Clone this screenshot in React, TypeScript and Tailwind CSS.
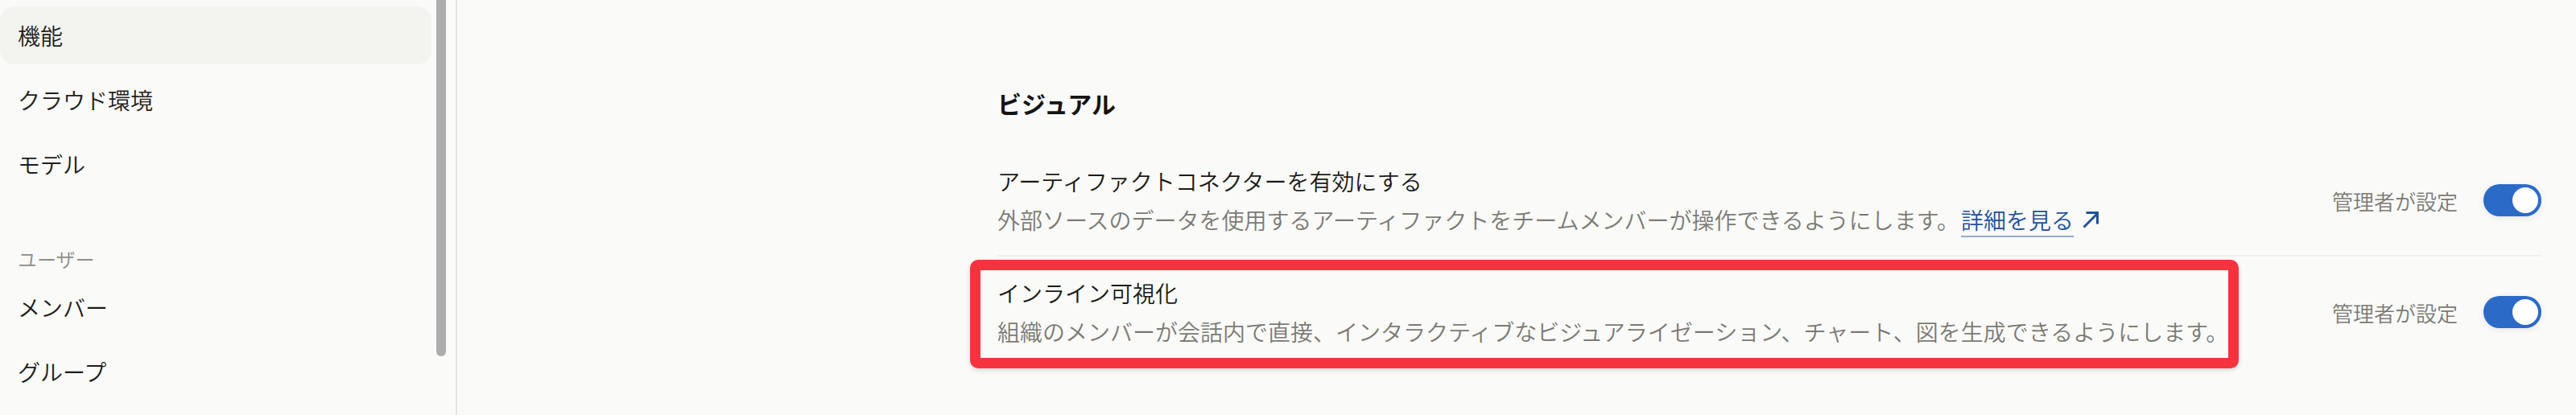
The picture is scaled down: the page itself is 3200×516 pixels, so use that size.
const font = { fontFamily: '"Noto Sans CJK JP", "Noto Sans", sans-serif' }

function NavItem({ label, active }: { label: string; active?: boolean }) {
  return (
    <div
      className={`flex h-[72px] w-[536px] items-center rounded-[18px] pl-[22px] text-[28px] font-[350] text-[#1d1d1b] ${
        active ? "bg-[#f3f3f0]" : ""
      }`}
    >
      {label}
    </div>
  )
}

function Toggle() {
  return (
    <div className="flex h-[40px] w-[72px] items-center justify-end rounded-full bg-[#2b6bc7] pr-[4px] shadow-[0_2px_8px_rgba(0,0,0,0.08)]">
      <div className="h-[32px] w-[32px] rounded-full bg-white" />
    </div>
  )
}

function ExternalArrow() {
  return (
    <svg viewBox="0 0 22 22" className="h-[22px] w-[22px]" fill="none" stroke="currentColor" strokeWidth={3}>
      <path d="M2.5 20.5 L19 4" />
      <path d="M5.5 2.5 H19.5 V16.5" />
    </svg>
  )
}

function SettingRow({
  title,
  children,
  last,
  highlight,
}: {
  title: string
  children: React.ReactNode
  last?: boolean
  highlight?: boolean
}) {
  return (
    <div
      className={`relative flex items-center justify-between ${
        last ? "pt-[25px] pb-[24px]" : "border-b-2 border-[#efefec] py-[24px]"
      }`}
    >
      <div className="flex flex-col">
        <div className="text-[28px] leading-[40px] font-[350] text-[#1a1a18]">{title}</div>
        <div className="mt-[8px] text-[28px] leading-[40px] font-[350] text-[#7b7a75]">{children}</div>
      </div>
      <div className="flex items-center gap-[32px]">
        <span className="text-[26px] font-[350] text-[#7b7a75]">管理者が設定</span>
        <Toggle />
      </div>
      {highlight && (
        // annotation frame drawn over the row
        <div className="pointer-events-none absolute top-[4px] left-[-34px] h-[135px] w-[1576px] rounded-[10px] border-[13px] border-[#f5333f] shadow-[0_2px_6px_rgba(0,0,0,0.15)]" />
      )}
    </div>
  )
}

export default function App() {
  return (
    <div className="flex h-[516px] w-[3200px] overflow-hidden bg-[#fafaf8]" style={font}>
      {/* Sidebar */}
      <aside className="relative h-full w-[568px] shrink-0 border-r-2 border-[#e4e4e1]">
        <nav className="flex flex-col gap-[8px] pt-[8px]">
          <NavItem label="機能" active />
          <NavItem label="クラウド環境" />
          <NavItem label="モデル" />
          <div className="mt-[58px] pl-[22px] text-[24px] leading-[32px] font-[350] text-[#8c8c88]">ユーザー</div>
          <NavItem label="メンバー" />
          <NavItem label="グループ" />
        </nav>
        <div className="absolute top-0 left-[542px] h-[443px] w-[12px] rounded-b-full bg-[#adadad]" />
      </aside>

      {/* Main */}
      <main className="flex-1 pt-[108px]">
        <div className="ml-[671px] w-[1918px]">
          <h2 className="text-[30px] leading-[40px] font-bold text-[#141413]">ビジュアル</h2>
          <div className="mt-[33px]">
            <SettingRow title="アーティファクトコネクターを有効にする">
              外部ソースのデータを使用するアーティファクトをチームメンバーが操作できるようにします。
              <a className="ml-[2px] inline-flex items-center gap-[10px] text-[#22509a]">
                <span className="underline decoration-[#93a9cc] decoration-2 underline-offset-[8px]">詳細を見る</span>
                <ExternalArrow />
              </a>
            </SettingRow>
            <SettingRow title="インライン可視化" last highlight>
              組織のメンバーが会話内で直接、インタラクティブなビジュアライゼーション、チャート、図を生成できるようにします。
            </SettingRow>
          </div>
        </div>
      </main>
    </div>
  )
}
